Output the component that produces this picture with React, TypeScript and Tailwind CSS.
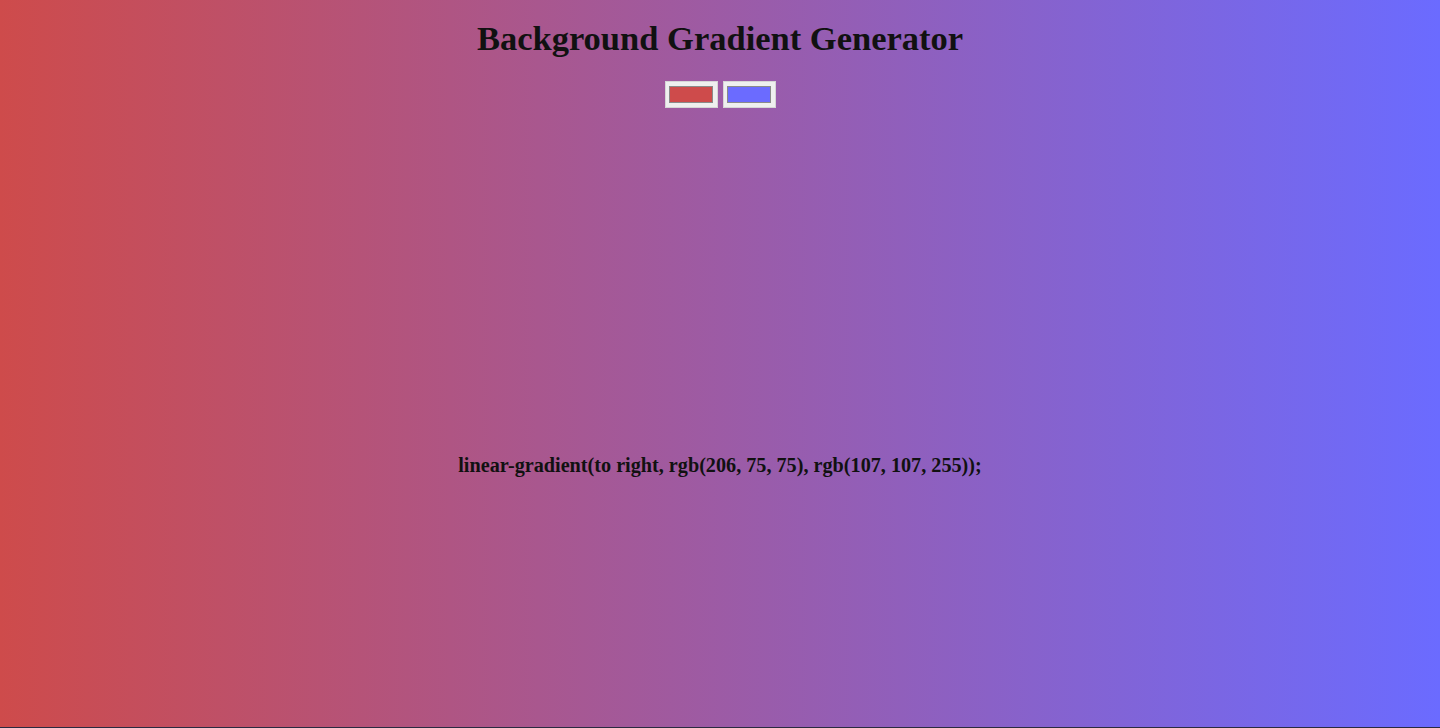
export default function App() {
  const color1 = 'rgb(206, 75, 75)';
  const color2 = 'rgb(107, 107, 255)';

  return (
    <div
      className="flex h-[728px] w-full flex-col items-center border-b border-[#2a2a40] bg-[linear-gradient(to_right,rgb(206,75,75),rgb(107,107,255))] text-[#111]"
      style={{ fontFamily: '"Liberation Serif", "Times New Roman", serif' }}
    >
      <h1 className="mt-[19px] text-[34.5px] font-bold leading-[39px]">Background Gradient Generator</h1>

      {/* color pickers */}
      <div className="mt-[23px] flex gap-[5px]">
        <div className="flex h-[27px] w-[53px] items-center justify-center border border-[#d6d6d6] bg-[#efefef]">
          <div className="h-[17px] w-[44px] border border-[#8a8a8a] bg-[#ce4b4b]" />
        </div>
        <div className="flex h-[27px] w-[53px] items-center justify-center border border-[#d6d6d6] bg-[#efefef]">
          <div className="h-[17px] w-[44px] border border-[#8a8a8a] bg-[#6b6bff]" />
        </div>
      </div>

      <h3 className="mt-[345px] text-[20.2px] font-bold leading-[24px]">
        linear-gradient(to right, {color1}, {color2});
      </h3>
    </div>
  );
}
